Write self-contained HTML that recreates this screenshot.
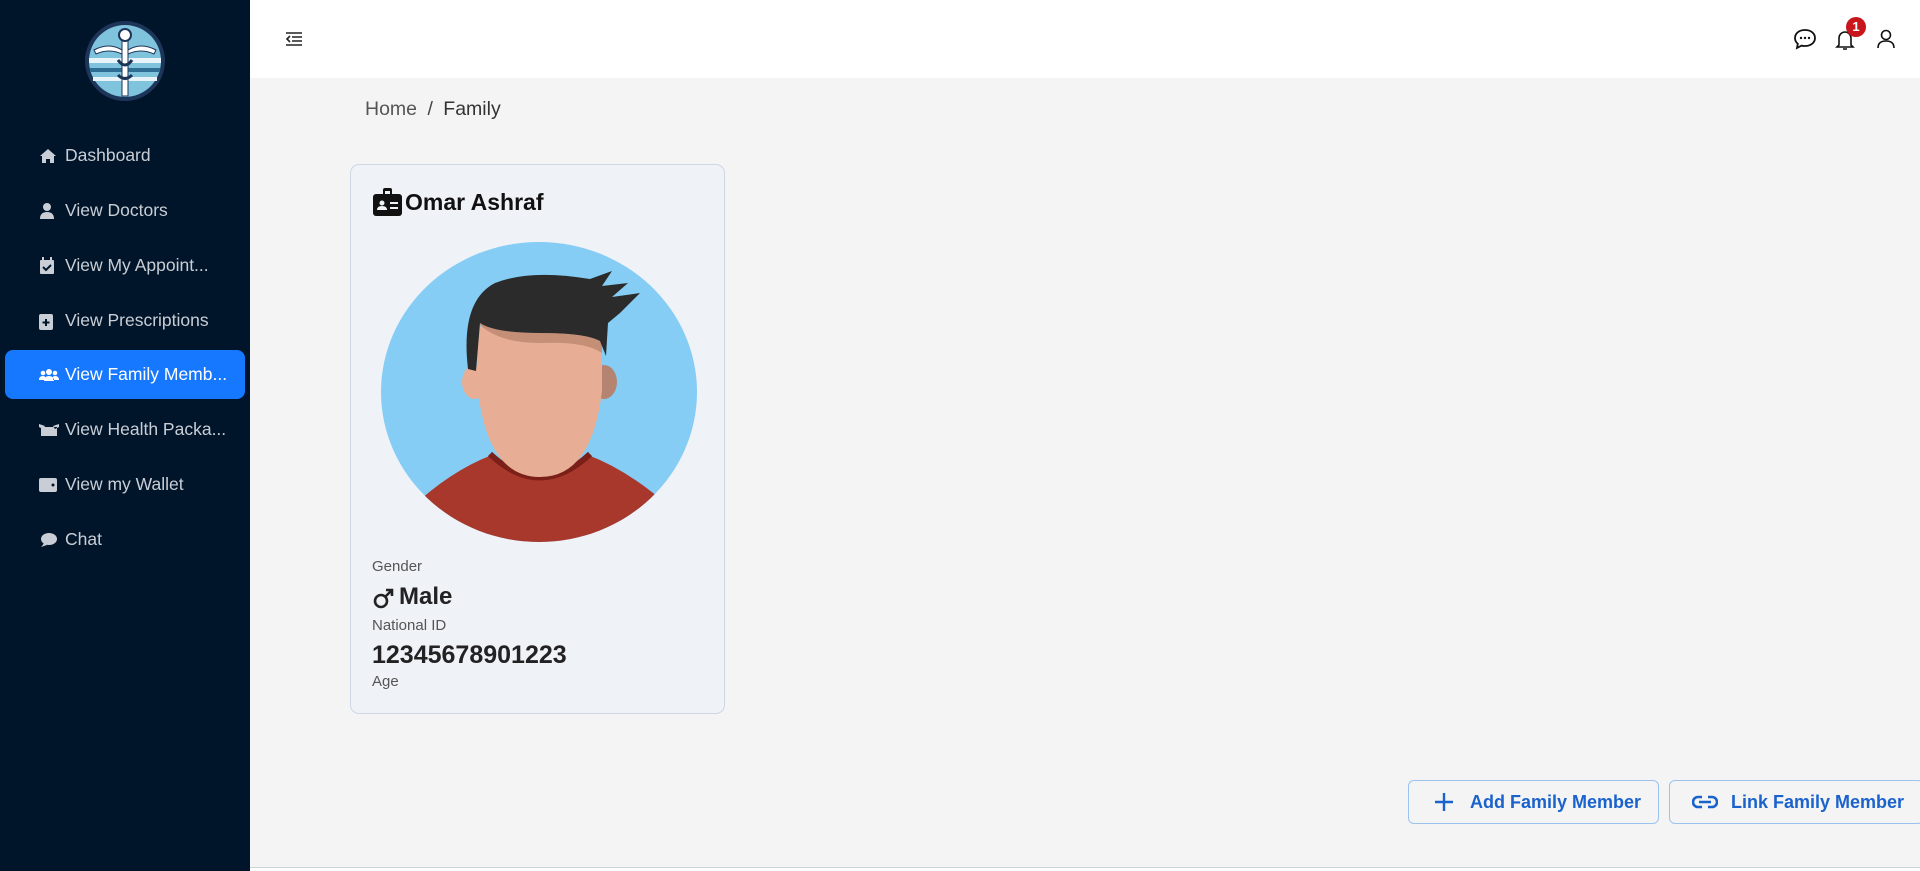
<!DOCTYPE html>
<html><head><meta charset="utf-8"><style>
*{box-sizing:border-box;margin:0;padding:0}
body{width:1920px;height:871px;overflow:hidden;background:#f4f4f4;font-family:"Liberation Sans",sans-serif;position:relative}
.side{position:absolute;left:0;top:0;width:250px;height:871px;background:#01152a}
.item{position:absolute;left:5px;width:240px;height:49px;color:#c9ced6;font-size:17.5px;display:flex;align-items:center}
.item svg{position:absolute;left:34px}
.item span{position:absolute;left:60px}
.item.act{background:#1677ff;color:#fff;border-radius:8px}
.hdr{position:absolute;left:250px;top:0;right:0;height:78px;background:#fff}
.card{position:absolute;left:350px;top:164px;width:375px;height:550px;background:#eff2f7;border:1px solid #cdd8e4;border-radius:9px}
.lbl{position:absolute;left:21px;font-size:15px;color:#555}
.val{position:absolute;left:21px;font-size:24px;color:#222;font-weight:600}
.btn{position:absolute;top:780px;height:44px;border:1px solid #9cc3f0;border-radius:6px;background:#f4f4f4;color:#1a62cc;font-size:18px;font-weight:700;display:flex;align-items:center}
</style></head><body>
<div class="side">
<svg style="position:absolute;left:84px;top:20px" width="82" height="82" viewBox="0 0 82 82">
<circle cx="41" cy="41" r="40" fill="#1d3559"/><circle cx="41" cy="41" r="36" fill="#7fc3dc"/>
<rect x="5" y="38" width="72" height="5" fill="#e8f4fa"/><rect x="6" y="48" width="70" height="4" fill="#2f6e94"/><rect x="9" y="57" width="64" height="4" fill="#e8f4fa"/>
<path d="M10 30 Q25 22 38 30 L38 34 Q25 28 12 34Z M72 30 Q57 22 44 30 L44 34 Q57 28 70 34Z" fill="#fff" stroke="#1d3559"/>
<rect x="38" y="18" width="6" height="58" fill="#fff" stroke="#1d3559"/><circle cx="41" cy="15" r="6" fill="#fff" stroke="#1d3559" stroke-width="2"/>
<path d="M34 40 Q41 50 48 40 M34 55 Q41 62 48 55" stroke="#1d3559" stroke-width="3" fill="none"/></svg>
<div class="item" style="top:131px"><svg width="18" height="16" viewBox="0 0 18 16"><path d="M9 1L1 8h2v7h4v-4h4v4h4V8h2z" fill="#c9ced6"/></svg><span>Dashboard</span></div>
<div class="item" style="top:186px"><svg width="16" height="18" viewBox="0 0 16 18"><circle cx="8" cy="5" r="4" fill="#c9ced6"/><path d="M1 17q0-7 7-7t7 7z" fill="#c9ced6"/></svg><span>View Doctors</span></div>
<div class="item" style="top:241px"><svg width="16" height="18" viewBox="0 0 16 18"><rect x="1" y="3" width="14" height="14" rx="1" fill="#c9ced6"/><path d="M4 10l3 3 5-5" stroke="#01152a" stroke-width="2" fill="none"/><rect x="3" y="0" width="2" height="4" fill="#c9ced6"/><rect x="11" y="0" width="2" height="4" fill="#c9ced6"/></svg><span>View My Appoint...</span></div>
<div class="item" style="top:296px"><svg width="14" height="18" viewBox="0 0 14 18"><rect x="0" y="2" width="14" height="16" rx="2" fill="#c9ced6"/><path d="M7 7v7M3.5 10.5h7" stroke="#01152a" stroke-width="2"/></svg><span>View Prescriptions</span></div>
<div class="item act" style="top:350px"><svg width="20" height="14" viewBox="0 0 20 14"><circle cx="10" cy="4" r="3" fill="#fff"/><circle cx="4" cy="5" r="2.3" fill="#fff"/><circle cx="16" cy="5" r="2.3" fill="#fff"/><path d="M5 13q0-5 5-5t5 5zM0 12q0-4 4-4 2 0 2 1v3zM20 12q0-4-4-4-2 0-2 1v3z" fill="#fff"/></svg><span style="color:#fff">View Family Memb...</span></div>
<div class="item" style="top:405px"><svg width="20" height="14" viewBox="0 0 20 14"><path d="M2 4h16v9H2z M0 1l6 2-2 3-4-2zM20 1l-6 2 2 3 4-2z" fill="#c9ced6"/></svg><span>View Health Packa...</span></div>
<div class="item" style="top:460px"><svg width="18" height="16" viewBox="0 0 18 16"><rect x="0" y="1" width="18" height="14" rx="2" fill="#c9ced6"/><circle cx="14" cy="8" r="1.5" fill="#01152a"/></svg><span>View my Wallet</span></div>
<div class="item" style="top:515px"><svg width="18" height="16" viewBox="0 0 18 16"><ellipse cx="10" cy="7" rx="8" ry="6" fill="#c9ced6"/><path d="M2 15q2-2 3-4l3 2z" fill="#c9ced6"/></svg><span>Chat</span></div>
</div>
<div class="hdr">
<svg style="position:absolute;left:35px;top:31px" width="18" height="16" viewBox="0 0 18 16"><path d="M1 2h16M7 6h10M7 10h10M1 14h16M5 5l-3 3 3 3" stroke="#222" stroke-width="1.6" fill="none"/></svg>
<svg style="position:absolute;left:1543px;top:28px" width="24" height="22" viewBox="0 0 24 22"><path d="M12 2C6 2 2 5.5 2 10c0 2.3 1 4.3 2.8 5.8L4 20l4.5-2.4c1.1.3 2.3.4 3.5.4 6 0 10-3.5 10-8S18 2 12 2z" stroke="#111" stroke-width="1.8" fill="none"/><circle cx="8" cy="10" r="1.2" fill="#111"/><circle cx="12" cy="10" r="1.2" fill="#111"/><circle cx="16" cy="10" r="1.2" fill="#111"/></svg>
<svg style="position:absolute;left:1585px;top:28px" width="20" height="24" viewBox="0 0 20 24"><path d="M4 17V10a6 6 0 0 1 12 0v7l2 2H2z M8 21h4" stroke="#111" stroke-width="1.6" fill="none"/></svg>
<div style="position:absolute;left:1596px;top:17px;width:20px;height:20px;border-radius:50%;background:#c8161d;color:#fff;font-size:13px;font-weight:700;text-align:center;line-height:20px">1</div>
<svg style="position:absolute;left:1626px;top:29px" width="20" height="20" viewBox="0 0 20 20"><circle cx="10" cy="6" r="4.5" stroke="#111" stroke-width="1.6" fill="none"/><path d="M2 19q0-7 8-7t8 7" stroke="#111" stroke-width="1.6" fill="none"/></svg>
</div>
<div style="position:absolute;left:365px;top:98px;font-size:19.5px;color:#555">Home <span style="margin:0 5px;color:#444">/</span> <span style="color:#333">Family</span></div>
<div class="card">
<svg style="position:absolute;left:22px;top:23px" width="29" height="28" viewBox="0 0 29 28"><rect x="0" y="6" width="29" height="22" rx="3" fill="#111"/><rect x="10" y="0" width="9" height="10" rx="2" fill="#111"/><rect x="12" y="3" width="5" height="3" fill="#eff2f7"/><circle cx="9" cy="15" r="2.5" fill="#eff2f7"/><path d="M4 22q0-4 5-4t5 4z" fill="#eff2f7"/><rect x="17" y="14" width="8" height="2" fill="#eff2f7"/><rect x="17" y="19" width="8" height="2" fill="#eff2f7"/></svg>
<div style="position:absolute;left:54px;top:24px;font-size:23px;font-weight:700;color:#111">Omar Ashraf</div>
<svg style="position:absolute;left:29px;top:76px" width="318" height="302" viewBox="0 0 318 302">
<defs><clipPath id="c"><ellipse cx="159" cy="151" rx="158" ry="150"/></clipPath></defs>
<g clip-path="url(#c)">
<rect width="318" height="302" fill="#86cdf5"/>
<path d="M118 250 L124 195 L196 195 L202 250Z" fill="#c48e77"/>
<path d="M30 268 Q70 230 112 214 Q160 262 208 214 Q250 230 292 268 L318 302 L0 302Z" fill="#a8372c"/>
<path d="M110 213 Q160 260 210 213" stroke="#7b2018" stroke-width="6" fill="none"/>
<ellipse cx="95" cy="141" rx="13" ry="17" fill="#e8ae95"/>
<ellipse cx="224" cy="141" rx="13" ry="17" fill="#b48470"/>
<path d="M98 95 Q98 70 160 70 Q222 70 222 110 L222 150 Q212 236 160 236 Q108 236 98 150Z" fill="#e8ae95"/>
<path d="M100 84 Q120 102 160 102 Q205 100 222 112 L222 100 Q200 92 160 92 Q118 92 100 80Z" fill="#c48e77"/>
<path d="M88 128 Q80 60 115 42 Q150 28 210 38 L232 30 L222 45 L248 42 L232 56 L260 52 L240 72 L228 82 L226 115 L220 100 Q205 92 160 92 Q115 92 100 82 L96 130Z" fill="#2b2b2b"/>
</g></svg>
<div class="lbl" style="top:393px">Gender</div>
<svg style="position:absolute;left:22px;top:422px" width="22" height="22" viewBox="0 0 22 22"><circle cx="8" cy="14" r="6" stroke="#222" stroke-width="2.6" fill="none"/><path d="M12 10l7-7M13 3h6v6" stroke="#222" stroke-width="2.6" fill="none"/></svg>
<div class="val" style="top:418px;left:48px">Male</div>
<div class="lbl" style="top:452px">National ID</div>
<div class="val" style="top:476px;font-size:25px">12345678901223</div>
<div class="lbl" style="top:508px">Age</div>
</div>
<div class="btn" style="left:1408px;width:251px"><svg style="position:absolute;left:25px" width="20" height="20" viewBox="0 0 20 20"><path d="M10 1v18M1 10h18" stroke="#1a62cc" stroke-width="2.4"/></svg><span style="position:absolute;left:61px">Add Family Member</span></div>
<div class="btn" style="left:1669px;width:255px"><svg style="position:absolute;left:22px" width="26" height="14" viewBox="0 0 26 14"><path d="M10 2H6a5 5 0 0 0 0 10h4M16 2h4a5 5 0 0 1 0 10h-4M7 7h12" stroke="#1a62cc" stroke-width="2.6" fill="none"/></svg><span style="position:absolute;left:61px">Link Family Member</span></div>
<div style="position:absolute;left:250px;right:0;top:867px;height:4px;background:#fff;border-top:1px solid #c9d3d8"></div>
</body></html>
